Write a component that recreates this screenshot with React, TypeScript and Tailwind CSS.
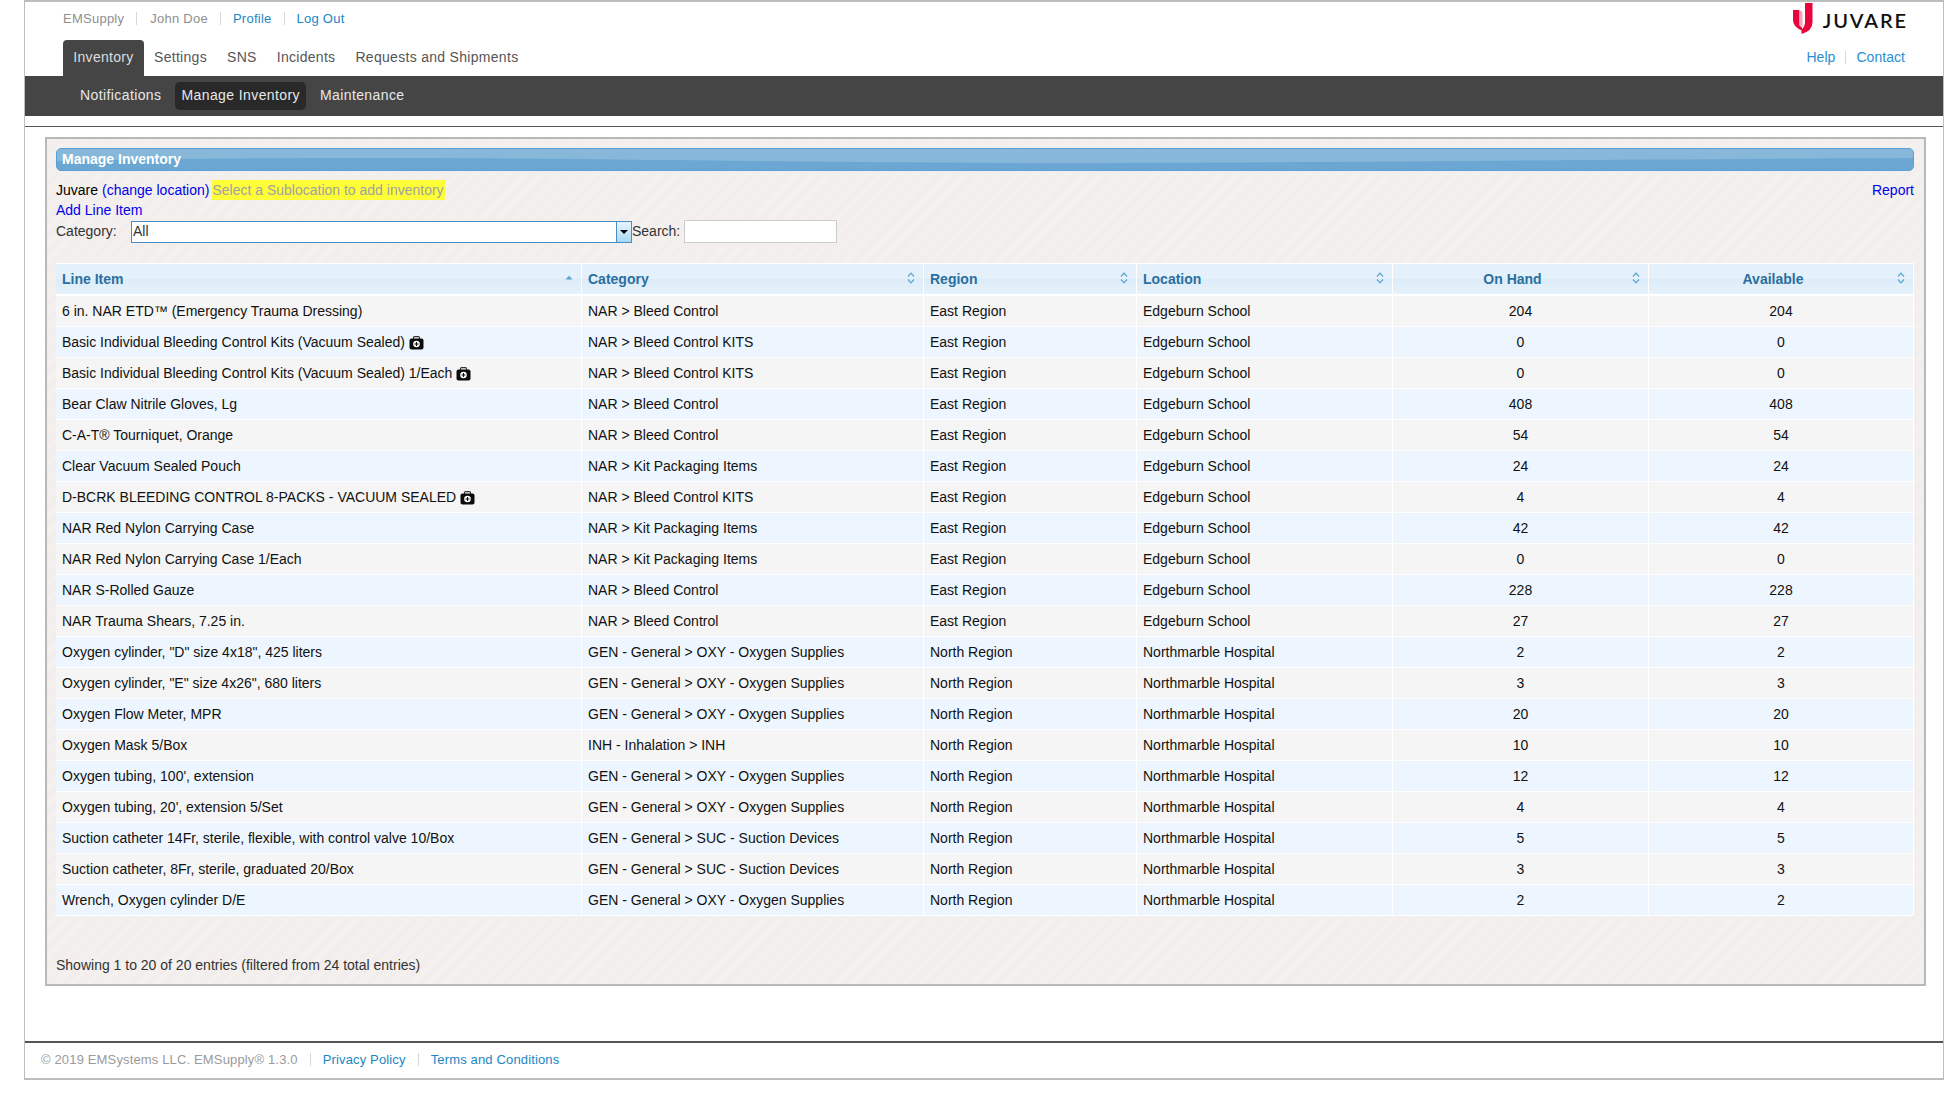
const FONT = "font-['Liberation_Sans',Arial,sans-serif]";

type Row = [string, string, string, string, string, string, boolean?];

const NAR_BC = "NAR > Bleed Control";
const NAR_KITS = "NAR > Bleed Control KITS";
const NAR_PKG = "NAR > Kit Packaging Items";
const OXY = "GEN - General > OXY - Oxygen Supplies";
const SUC = "GEN - General > SUC - Suction Devices";
const EAST = "East Region";
const NORTH = "North Region";
const EDGE = "Edgeburn School";
const NMH = "Northmarble Hospital";

const ROWS: Row[] = [
  ["6 in. NAR ETD™ (Emergency Trauma Dressing)", NAR_BC, EAST, EDGE, "204", "204"],
  ["Basic Individual Bleeding Control Kits (Vacuum Sealed)", NAR_KITS, EAST, EDGE, "0", "0", true],
  ["Basic Individual Bleeding Control Kits (Vacuum Sealed) 1/Each", NAR_KITS, EAST, EDGE, "0", "0", true],
  ["Bear Claw Nitrile Gloves, Lg", NAR_BC, EAST, EDGE, "408", "408"],
  ["C-A-T® Tourniquet, Orange", NAR_BC, EAST, EDGE, "54", "54"],
  ["Clear Vacuum Sealed Pouch", NAR_PKG, EAST, EDGE, "24", "24"],
  ["D-BCRK BLEEDING CONTROL 8-PACKS - VACUUM SEALED", NAR_KITS, EAST, EDGE, "4", "4", true],
  ["NAR Red Nylon Carrying Case", NAR_PKG, EAST, EDGE, "42", "42"],
  ["NAR Red Nylon Carrying Case 1/Each", NAR_PKG, EAST, EDGE, "0", "0"],
  ["NAR S-Rolled Gauze", NAR_BC, EAST, EDGE, "228", "228"],
  ["NAR Trauma Shears, 7.25 in.", NAR_BC, EAST, EDGE, "27", "27"],
  ['Oxygen cylinder, "D" size 4x18", 425 liters', OXY, NORTH, NMH, "2", "2"],
  ['Oxygen cylinder, "E" size 4x26", 680 liters', OXY, NORTH, NMH, "3", "3"],
  ["Oxygen Flow Meter, MPR", OXY, NORTH, NMH, "20", "20"],
  ["Oxygen Mask 5/Box", "INH - Inhalation > INH", NORTH, NMH, "10", "10"],
  ["Oxygen tubing, 100', extension", OXY, NORTH, NMH, "12", "12"],
  ["Oxygen tubing, 20', extension 5/Set", OXY, NORTH, NMH, "4", "4"],
  ["Suction catheter 14Fr, sterile, flexible, with control valve 10/Box", SUC, NORTH, NMH, "5", "5"],
  ["Suction catheter, 8Fr, sterile, graduated 20/Box", SUC, NORTH, NMH, "3", "3"],
  ["Wrench, Oxygen cylinder D/E", OXY, NORTH, NMH, "2", "2"],
];

const COLUMNS = [
  { label: "Line Item", width: "w-[526px]", center: false, asc: true },
  { label: "Category", width: "w-[342px]", center: false },
  { label: "Region", width: "w-[213px]", center: false },
  { label: "Location", width: "w-[256px]", center: false },
  { label: "On Hand", width: "w-[256px]", center: true },
  { label: "Available", width: "w-[265px]", center: true },
];

function SortIcon({ asc }: { asc?: boolean }) {
  if (asc) {
    return (
      <svg width="8" height="5" viewBox="0 0 8 5" className="absolute right-[8px] top-[11px]">
        <path d="M0.5 4.5 L4 0.8 L7.5 4.5 Z" fill="#5ba3cf" />
      </svg>
    );
  }
  return (
    <svg width="8" height="12" viewBox="0 0 8 12" className="absolute right-[8px] top-[8px]">
      <path d="M1 4.5 L4 1.2 L7 4.5 M1 7.5 L4 10.8 L7 7.5" fill="none" stroke="#5ba3cf" strokeWidth="1.2" />
    </svg>
  );
}

function KitIcon() {
  return (
    <svg width="15" height="14" viewBox="0 0 15 14" className="ml-[4px] inline-block align-[-3px]">
      <path d="M4.5 3 V1.6 Q4.5 0.6 5.5 0.6 H9.5 Q10.5 0.6 10.5 1.6 V3" fill="none" stroke="#333" strokeWidth="1.1" />
      <rect x="0.5" y="2.5" width="14" height="11" rx="2" fill="#0c0c0c" />
      <circle cx="7.5" cy="8" r="3.3" fill="#fff" />
      <path d="M7.5 6 V10 M5.5 8 H9.5" stroke="#0c0c0c" strokeWidth="1.1" />
    </svg>
  );
}

function JuvareLogo() {
  return (
    <div className="mr-[-3px] flex items-start">
      <svg width="20" height="32" viewBox="0 0 20 32" className="mt-[1px]">
        <path d="M0 7 H6.5 V22.5 L9 24.5 V27.5 Q0 24 0 17 Z" fill="#e8053c" />
        <path d="M6.5 7 L9.5 9 V24 L6.5 22 Z" fill="#f7a6b8" />
        <path d="M12 0 H19.5 V19 Q19.5 28 8.5 31 V26.5 Q12 24 12 19 Z" fill="#e8053c" />
      </svg>
      <span className="ml-[10px] mt-[6px] font-['Lato',sans-serif] text-[20px] leading-[25px] font-semibold tracking-[1.9px] text-[#111]">
        JUVARE
      </span>
    </div>
  );
}

function Divider() {
  return <span className="mx-[12px] h-[13px] w-px bg-[#d8d8d8]" />;
}

export default function App() {
  return (
    <div className={`${FONT} h-[1108px] bg-white`}>
      <div className="ml-[24px] flex h-[1080px] flex-col border-x border-y-2 border-x-[#bdbdbd] border-y-[#bdbdbd] bg-white">
        {/* Top links and main nav */}
        <div className="flex h-[74px] justify-between">
          <div className="pl-[38px]">
            <div className="flex h-[38px] items-center pb-[5px] text-[13px] tracking-[0.25px]">
              <span className="text-[#8f8f8f]">EMSupply</span>
              <Divider />
              <span className="ml-[1px] text-[#8f8f8f]">John Doe</span>
              <Divider />
              <a className="text-[#1b86c4]">Profile</a>
              <Divider />
              <a className="text-[#1b86c4]">Log Out</a>
            </div>
            <div className="flex h-[36px] items-center text-[14px] tracking-[0.3px] text-[#555]">
              <span className="flex h-full w-[81px] items-center justify-center rounded-t-[4px] bg-[#454545] pb-[2px] text-[#dddddd]">
                Inventory
              </span>
              <span className="ml-[10px] pb-[2px]">Settings</span>
              <span className="ml-[20px] pb-[2px]">SNS</span>
              <span className="ml-[20px] pb-[2px]">Incidents</span>
              <span className="ml-[20px] pb-[2px]">Requests and Shipments</span>
            </div>
          </div>
          <div className="flex flex-col items-end pr-[38px]">
            <JuvareLogo />
            <div className="mt-[12px] flex items-center text-[14px] tracking-[0.05px]">
              <a className="text-[#2a8fd0]">Help</a>
              <span className="mx-[10px] h-[13px] w-px bg-[#d8d8d8]" />
              <a className="text-[#2a8fd0]">Contact</a>
            </div>
          </div>
        </div>

        {/* Sub nav */}
        <div className="flex h-[40px] items-center bg-[#454545] pb-[1px] pl-[49px] text-[14px] tracking-[0.4px] text-[#e8e8e8]">
          <span className="px-[6px]">Notifications</span>
          <span className="ml-[8px] flex h-[28px] items-center rounded-[5px] bg-[#292929] px-[6px]">Manage Inventory</span>
          <span className="ml-[8px] px-[6px]">Maintenance</span>
        </div>

        <div className="mt-[10px] h-px bg-[#555]" />

        {/* Panel */}
        <div className="ml-[20px] mr-[17px] mt-[10px] h-[849px] border-2 border-[#b8b8b8] bg-[#f2efec] bg-[repeating-linear-gradient(135deg,#f3f0ed_0,#f3f0ed_6px,#f1eeed_6px,#f1eeed_12px)] pl-[9px] pr-[10px] pt-[9px] text-[14px] text-[#333]">
          <div className="relative h-[23px] overflow-hidden rounded-[5px] border border-[#5aa0d6] bg-[#6ba7d2]">
            <svg className="absolute inset-0 h-full w-full" preserveAspectRatio="none" viewBox="0 0 1856 21">
              <path d="M0 12 C 300 6, 500 10, 800 13 C 1100 16, 1400 11, 1856 9 V0 H0 Z" fill="#87b8da" />
            </svg>
            <span className="relative ml-[5px] text-[14px] leading-[21px] font-bold text-white">Manage Inventory</span>
          </div>

          <div className="mt-[9px] flex h-[20px] items-center justify-between">
            <div className="flex items-center">
              <span className="text-black">Juvare</span>
              <a className="ml-[4px] text-[#0000ee]">(change location)</a>
              <span className="ml-[3px] bg-[#ffff38] pr-[1px] leading-[20px] text-[#a0a0a0]">Select a Sublocation to add inventory</span>
            </div>
            <a className="text-[#0000ee]">Report</a>
          </div>
          <div className="flex h-[20px] items-center">
            <a className="text-[#0000ee]">Add Line Item</a>
          </div>
          <div className="flex h-[23px] items-center">
            <span className="w-[75px]">Category:</span>
            <div className="flex h-[22px] w-[501px] items-center justify-between border border-[#4a8dc0] bg-white">
              <span className="ml-[1px] text-[#333]">All</span>
              <span className="flex h-full w-[15px] items-center justify-center border-l border-[#4a8dc0] bg-gradient-to-b from-[#e8f4fc] to-[#a9d8f5]">
                <span className="h-0 w-0 border-x-[4px] border-t-[4px] border-x-transparent border-t-black" />
              </span>
            </div>
            <span>Search:</span>
            <div className="ml-[4px] h-[23px] w-[153px] border border-[#cccccc] bg-white" />
          </div>

          {/* Table */}
          <table className="mt-[20px] w-[1858px] table-fixed border-separate border-spacing-0 text-[14px] text-[#111]">
            <thead>
              <tr>
                {COLUMNS.map((col) => (
                  <th
                    key={col.label}
                    className={`${col.width} relative h-[33px] border-t border-r border-b-2 border-white bg-[linear-gradient(#e5f1fa_0,#e5f1fa_50%,#dcecf8_50%,#e6f2fb_100%)] pl-[6px] font-bold text-[#2a6f9f] ${col.center ? "pr-[22px] text-center" : "pr-[6px] text-left"}`}
                  >
                    {col.label}
                    <SortIcon asc={col.asc} />
                  </th>
                ))}
              </tr>
            </thead>
            <tbody>
              {ROWS.map((row, i) => (
                <tr key={row[0]} className={i % 2 === 0 ? "bg-[#f5f5f5]" : "bg-[#edf6fe]"}>
                  {row.slice(0, 6).map((cell, j) => (
                    <td
                      key={j}
                      className={`h-[31px] border-r border-b border-white px-[6px] ${j >= 4 ? "text-center" : "text-left"}`}
                    >
                      {cell}
                      {j === 0 && row[6] ? <KitIcon /> : null}
                    </td>
                  ))}
                </tr>
              ))}
            </tbody>
          </table>

          <div className="mt-[39px] text-[14px] leading-[20px] text-[#333]">
            Showing 1 to 20 of 20 entries (filtered from 24 total entries)
          </div>
        </div>

        {/* Footer */}
        <div className="mt-auto flex h-[37px] items-center border-t-2 border-[#555] pb-[2px] pl-[16px] text-[13px] tracking-[0.15px]">
          <span className="text-[#9a9a9a]">© 2019 EMSystems LLC. EMSupply® 1.3.0</span>
          <Divider />
          <a className="text-[#1b86c4]">Privacy Policy</a>
          <Divider />
          <a className="text-[#1b86c4]">Terms and Conditions</a>
        </div>
      </div>
    </div>
  );
}
